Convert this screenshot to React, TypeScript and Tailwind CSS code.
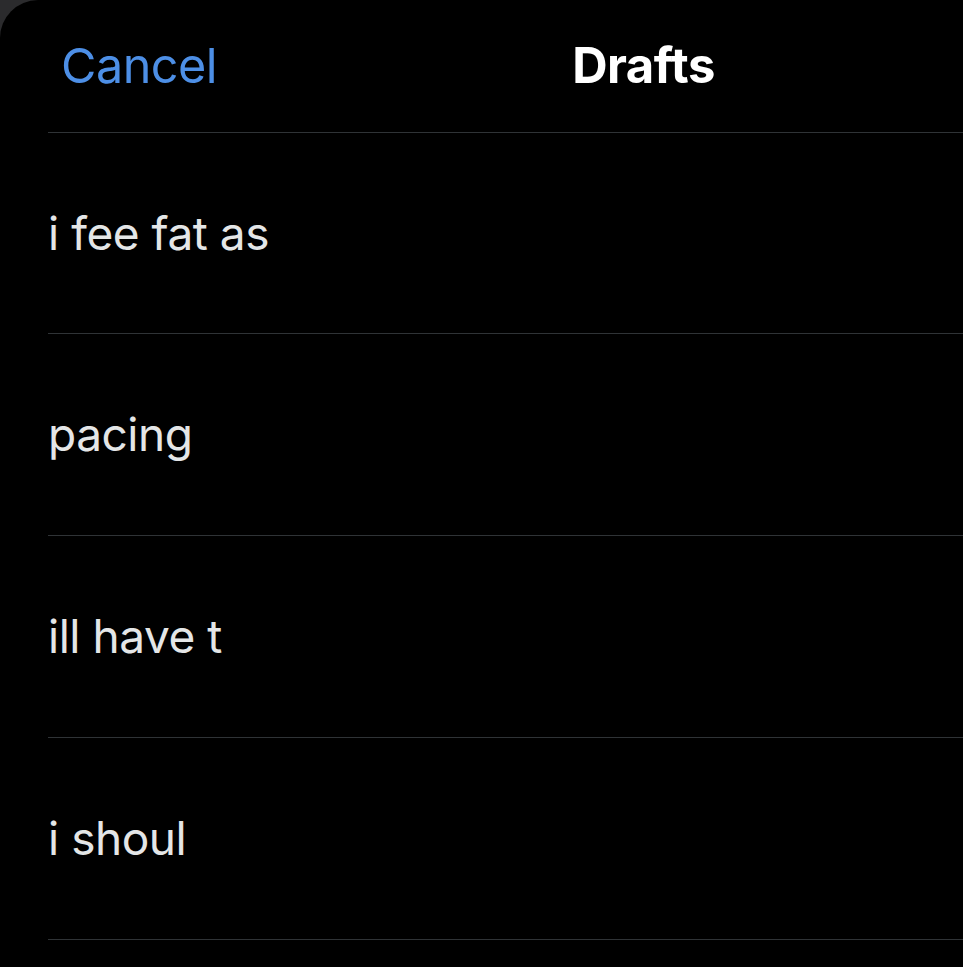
const drafts = ["i fee fat as", "pacing", "ill have t", "i shoul"];

export default function App() {
  return (
    <div className="w-[963px] h-[967px] overflow-hidden bg-[#2b2b2d]">
      <div className="h-full rounded-tl-[38px] bg-black font-['Inter',sans-serif]">
        <header className="flex h-[132px] items-center pl-[61px]">
          <button className="text-[48.5px] tracking-[-0.01em] text-[#4d8fe6]">Cancel</button>
          <h1 className="ml-[355px] text-[49px] font-bold tracking-[-0.01em] text-white">Drafts</h1>
        </header>
        <ul className="ml-[48px] border-t border-[#2f3336]">
          {drafts.map((d, i) => (
            <li
              key={d}
              className={`flex items-center border-b border-[#2f3336] text-[46px] tracking-[-0.01em] text-[#e4e6e7] ${
                i === 0 ? "h-[201px]" : "h-[202px]"
              }`}
            >
              {d}
            </li>
          ))}
        </ul>
      </div>
    </div>
  );
}
